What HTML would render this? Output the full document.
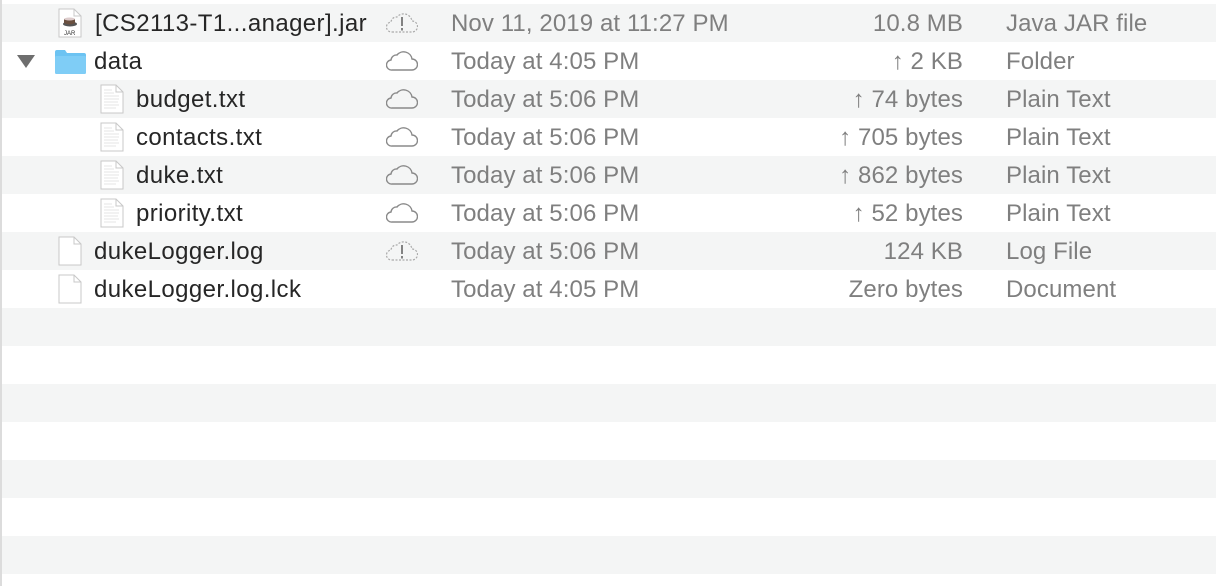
<!DOCTYPE html>
<html><head><style>
body{margin:0;width:1216px;height:586px;overflow:hidden;background:#fff;font-family:"Liberation Sans",Arial,sans-serif;position:relative}
.row{position:absolute;left:0;width:1216px;height:38px;font-size:24px;line-height:40px}
.g{background:#f4f5f5}
.n{position:absolute;color:#262626;white-space:nowrap;letter-spacing:0.4px}
.d{position:absolute;left:451px;color:#7f7f7f;white-space:nowrap;letter-spacing:0.1px}
.s{position:absolute;right:253px;color:#7f7f7f;white-space:nowrap;letter-spacing:0.1px}
.k{position:absolute;left:1006px;color:#7f7f7f;white-space:nowrap;letter-spacing:0.1px}
.ic{position:absolute;top:0}
.edge{position:absolute;left:0;top:0;width:2px;height:586px;background:#dcdcdc}
</style></head><body>
<div class="row g" style="top:4px"></div>
<div class="row" style="top:42px"></div>
<div class="row g" style="top:80px"></div>
<div class="row" style="top:118px"></div>
<div class="row g" style="top:156px"></div>
<div class="row" style="top:194px"></div>
<div class="row g" style="top:232px"></div>
<div class="row" style="top:270px"></div>
<div class="row g" style="top:308px"></div>
<div class="row g" style="top:384px"></div>
<div class="row g" style="top:460px"></div>
<div class="row g" style="top:536px"></div>

<svg width="0" height="0" style="position:absolute">
<defs>
<symbol id="cloud" viewBox="0 0 32 22"><path d="M6 20 H26 A5.5 5.5 0 0 0 26 9 A8.5 8.5 0 0 0 11 5 A5.5 5.5 0 0 0 5 10 A5 5 0 0 0 6 20 Z" fill="none" stroke="#8a8a8a" stroke-width="1.4"/></symbol>
<symbol id="warn" viewBox="0 0 32 22"><path d="M6 20 H26 A5.5 5.5 0 0 0 26 9 A8.5 8.5 0 0 0 11 5 A5.5 5.5 0 0 0 5 10 A5 5 0 0 0 6 20 Z" fill="none" stroke="#aaa" stroke-width="1.2" stroke-dasharray="2 1.5"/><path d="M16 5 V14 M16 16 V18.5" stroke="#666" stroke-width="1.6"/></symbol>
<symbol id="doc" viewBox="0 0 24 30"><path d="M1 1 H16 L23 8 V29 H1 Z" fill="#fff" stroke="#c8c8c8"/><path d="M16 1 V8 H23" fill="none" stroke="#c8c8c8"/></symbol>
<symbol id="txt" viewBox="0 0 24 30"><path d="M1 1 H16 L23 8 V29 H1 Z" fill="#fff" stroke="#c8c8c8"/><path d="M16 1 V8 H23" fill="none" stroke="#c8c8c8"/><path d="M4 6h8M4 9h10M4 12h15M4 15h15M4 18h14M4 21h15M4 24h12" stroke="#ddd" stroke-width="0.8"/></symbol>
</defs></svg>

<div class="row" style="top:4px">
<svg class="ic" style="left:58px;top:4px" width="24" height="30" viewBox="0 0 24 30"><use href="#doc"/><ellipse cx="12" cy="16" rx="7" ry="2.5" fill="#555"/><path d="M6 11 H17 V15 Q12 18 6 15 Z" fill="#6a5040"/><ellipse cx="11.5" cy="11" rx="5.5" ry="1.5" fill="#dcc"/><text x="6" y="27" font-size="6" fill="#333" font-family="Liberation Sans">JAR</text></svg>
<span class="n" style="left:95px">[CS2113-T1...anager].jar</span>
<svg class="ic" style="left:386px;top:8px" width="32" height="22"><use href="#warn"/></svg>
<span class="d">Nov 11, 2019 at 11:27 PM</span><span class="s">10.8 MB</span><span class="k">Java JAR file</span></div>
<div class="row" style="top:42px">
<svg class="ic" style="left:17px;top:13px" width="18" height="14"><path d="M0 0 H18 L9 13 Z" fill="#6e6e6e"/></svg>
<svg class="ic" style="left:55px;top:8px" width="31" height="24"><path d="M0 2 Q0 0 2 0 H10 L12 3 H29 Q31 3 31 5 V22 Q31 24 29 24 H2 Q0 24 0 22 Z" fill="#6cc3f2"/><rect x="0" y="6" width="31" height="18" rx="1.5" fill="#7fcdf6"/></svg>
<span class="n" style="left:94px">data</span>
<svg class="ic" style="left:386px;top:8px" width="32" height="22"><use href="#cloud"/></svg>
<span class="d">Today at 4:05 PM</span><span class="s">↑ 2 KB</span><span class="k">Folder</span></div>
<div class="row" style="top:80px"><svg class="ic" style="left:100px;top:4px" width="24" height="30"><use href="#txt"/></svg><span class="n" style="left:136px">budget.txt</span><svg class="ic" style="left:386px;top:8px" width="32" height="22"><use href="#cloud"/></svg><span class="d">Today at 5:06 PM</span><span class="s">↑ 74 bytes</span><span class="k">Plain Text</span></div>
<div class="row" style="top:118px"><svg class="ic" style="left:100px;top:4px" width="24" height="30"><use href="#txt"/></svg><span class="n" style="left:136px">contacts.txt</span><svg class="ic" style="left:386px;top:8px" width="32" height="22"><use href="#cloud"/></svg><span class="d">Today at 5:06 PM</span><span class="s">↑ 705 bytes</span><span class="k">Plain Text</span></div>
<div class="row" style="top:156px"><svg class="ic" style="left:100px;top:4px" width="24" height="30"><use href="#txt"/></svg><span class="n" style="left:136px">duke.txt</span><svg class="ic" style="left:386px;top:8px" width="32" height="22"><use href="#cloud"/></svg><span class="d">Today at 5:06 PM</span><span class="s">↑ 862 bytes</span><span class="k">Plain Text</span></div>
<div class="row" style="top:194px"><svg class="ic" style="left:100px;top:4px" width="24" height="30"><use href="#txt"/></svg><span class="n" style="left:136px">priority.txt</span><svg class="ic" style="left:386px;top:8px" width="32" height="22"><use href="#cloud"/></svg><span class="d">Today at 5:06 PM</span><span class="s">↑ 52 bytes</span><span class="k">Plain Text</span></div>
<div class="row" style="top:232px"><svg class="ic" style="left:58px;top:4px" width="24" height="30"><use href="#doc"/></svg><span class="n" style="left:94px">dukeLogger.log</span><svg class="ic" style="left:386px;top:8px" width="32" height="22"><use href="#warn"/></svg><span class="d">Today at 5:06 PM</span><span class="s">124 KB</span><span class="k">Log File</span></div>
<div class="row" style="top:270px"><svg class="ic" style="left:58px;top:4px" width="24" height="30"><use href="#doc"/></svg><span class="n" style="left:94px">dukeLogger.log.lck</span><span class="d">Today at 4:05 PM</span><span class="s">Zero bytes</span><span class="k">Document</span></div>
<div class="edge"></div>
</body></html>
